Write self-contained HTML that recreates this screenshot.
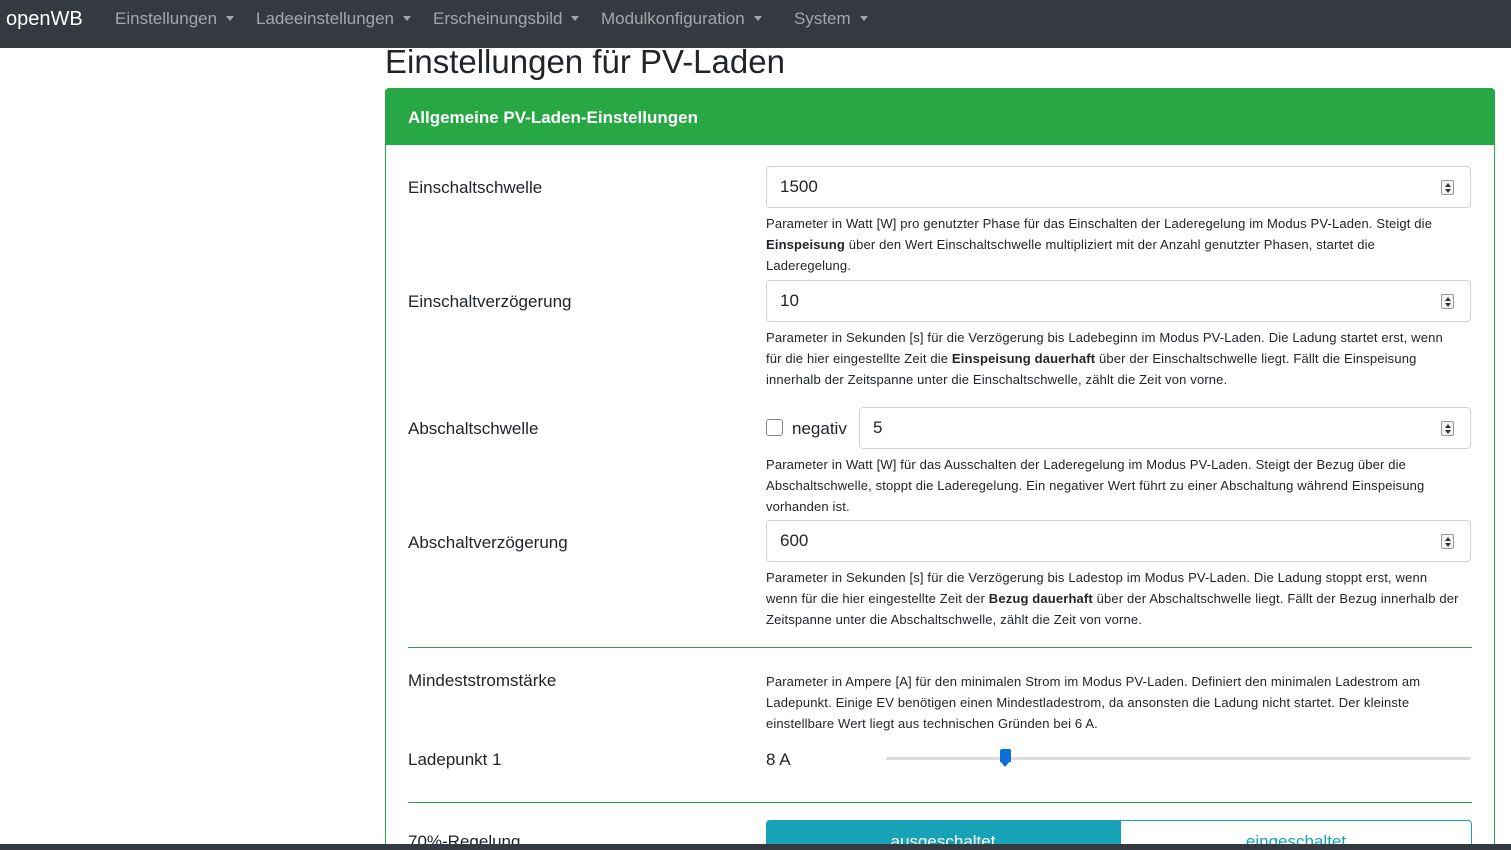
<!DOCTYPE html>
<html><head><meta charset="utf-8"><style>
*{box-sizing:border-box}
html,body{margin:0;width:1511px;height:850px;overflow:hidden}
body{background:#fff;font-family:"Liberation Sans",sans-serif;color:#212529;position:relative}
.nav{position:absolute;left:0;top:0;width:1511px;height:48px;background:#343a40}
.nav span{position:absolute;top:9px;font-size:17px;color:rgba(255,255,255,.55)}
.nav .brand{color:#fff;font-size:20px;top:8px;left:6px}
.car{display:inline-block;margin-left:9px;border-top:5px solid;border-left:4px solid transparent;border-right:4px solid transparent;vertical-align:3px}
h1{position:absolute;left:385px;top:43px;margin:0;font-weight:400;font-size:33px}
.card{position:absolute;left:385px;top:88px;width:1110px;height:756px;border:1px solid #28a745;border-bottom:0;border-radius:4px 4px 0 0}
.hd{position:absolute;left:0;top:0;width:100%;height:56px;background:#28a745;color:#fff;font-weight:bold;font-size:17px;padding:19px 22px}
.abs{position:absolute}
.lbl{position:absolute;left:408px;font-size:17px}
.inp{position:absolute;height:42px;border:1px solid #ced4da;border-radius:4px;font-size:17px;padding:10px 13px;right:40px}
.sp{position:absolute;right:16px;top:13px;width:13px;height:15px;border:1px solid #999;border-radius:2px;background:#f4f4f4}
.sp:before{content:"";position:absolute;left:3px;top:2px;border-bottom:4px solid #333;border-left:3px solid transparent;border-right:3px solid transparent}
.sp:after{content:"";position:absolute;left:3px;top:8px;border-top:4px solid #333;border-left:3px solid transparent;border-right:3px solid transparent}
.help{position:absolute;left:766px;width:695px;font-size:13px;line-height:21px;color:#212529;letter-spacing:.15px}
hr{position:absolute;left:408px;width:1064px;border:0;border-top:1px solid #28a745;margin:0}
</style></head><body>
<div class="nav">
<span class="brand">openWB</span>
<span style="left:115px">Einstellungen<i class="car"></i></span>
<span style="left:256px">Ladeeinstellungen<i class="car"></i></span>
<span style="left:433px">Erscheinungsbild<i class="car"></i></span>
<span style="left:601px">Modulkonfiguration<i class="car"></i></span>
<span style="left:794px">System<i class="car"></i></span>
</div>
<h1>Einstellungen für PV-Laden</h1>
<div class="card"><div class="hd">Allgemeine PV-Laden-Einstellungen</div></div>

<div class="lbl" style="top:178px">Einschaltschwelle</div>
<div class="inp" style="left:766px;top:166px">1500<i class="sp"></i></div>
<div class="help" style="top:213px">Parameter in Watt [W] pro genutzter Phase für das Einschalten der Laderegelung im Modus PV-Laden. Steigt die <b>Einspeisung</b> über den Wert Einschaltschwelle multipliziert mit der Anzahl genutzter Phasen, startet die Laderegelung.</div>

<div class="lbl" style="top:292px">Einschaltverzögerung</div>
<div class="inp" style="left:766px;top:280px">10<i class="sp"></i></div>
<div class="help" style="top:327px">Parameter in Sekunden [s] für die Verzögerung bis Ladebeginn im Modus PV-Laden. Die Ladung startet erst, wenn für die hier eingestellte Zeit die <b>Einspeisung dauerhaft</b> über der Einschaltschwelle liegt. Fällt die Einspeisung innerhalb der Zeitspanne unter die Einschaltschwelle, zählt die Zeit von vorne.</div>

<div class="lbl" style="top:419px">Abschaltschwelle</div>
<div class="abs" style="left:766px;top:419px;width:17px;height:17px;border:1px solid #888;border-radius:3px"></div>
<div class="abs" style="left:792px;top:419px;font-size:17px">negativ</div>
<div class="inp" style="left:859px;top:407px">5<i class="sp"></i></div>
<div class="help" style="top:454px">Parameter in Watt [W] für das Ausschalten der Laderegelung im Modus PV-Laden. Steigt der Bezug über die Abschaltschwelle, stoppt die Laderegelung. Ein negativer Wert führt zu einer Abschaltung während Einspeisung vorhanden ist.</div>

<div class="lbl" style="top:533px">Abschaltverzögerung</div>
<div class="inp" style="left:766px;top:520px">600<i class="sp"></i></div>
<div class="help" style="top:567px">Parameter in Sekunden [s] für die Verzögerung bis Ladestop im Modus PV-Laden. Die Ladung stoppt erst, wenn wenn für die hier eingestellte Zeit der <b>Bezug dauerhaft</b> über der Abschaltschwelle liegt. Fällt der Bezug innerhalb der Zeitspanne unter die Abschaltschwelle, zählt die Zeit von vorne.</div>

<hr style="top:647px">
<div class="lbl" style="top:671px">Mindeststromstärke</div>
<div class="help" style="top:671px">Parameter in Ampere [A] für den minimalen Strom im Modus PV-Laden. Definiert den minimalen Ladestrom am Ladepunkt. Einige EV benötigen einen Mindestladestrom, da ansonsten die Ladung nicht startet. Der kleinste einstellbare Wert liegt aus technischen Gründen bei 6 A.</div>
<div class="lbl" style="top:750px">Ladepunkt 1</div>
<div class="abs" style="left:766px;top:750px;font-size:17px">8 A</div>
<div class="abs" style="left:886px;top:757px;width:585px;height:3px;background:#ddd;border-radius:2px"></div>
<div class="abs" style="left:1000px;top:749px;width:11px;height:13px;background:#0a6fd8;border-radius:2px 2px 0 0"></div>
<div class="abs" style="left:1000px;top:761px;width:0;height:0;border-left:5.5px solid transparent;border-right:5.5px solid transparent;border-top:6px solid #0a6fd8"></div>
<hr style="top:802px">
<div class="lbl" style="top:832px">70%-Regelung</div>
<div class="abs" style="left:766px;top:820px;width:354px;height:40px;background:#17a2b8;border-radius:4px 0 0 4px;color:#fff;font-size:17px;text-align:center;padding-top:12px">ausgeschaltet</div>
<div class="abs" style="left:1120px;top:820px;width:352px;height:40px;border:1px solid #17a2b8;border-radius:0 4px 4px 0;color:#17a2b8;font-size:17px;text-align:center;padding-top:11px">eingeschaltet</div>
<div class="abs" style="left:0;top:844px;width:1511px;height:6px;background:#343a40;z-index:5"></div>
</body></html>
